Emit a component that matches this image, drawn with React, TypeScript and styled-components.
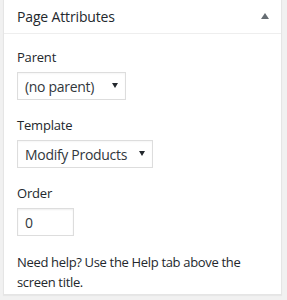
import React, { ReactElement } from 'react';
import styled, { createGlobalStyle } from 'styled-components';

const GlobalStyle = createGlobalStyle`
  html, body {
    margin: 0;
    padding: 0;
    background: #f1f1f1;
  }
  body {
    font-family: "Open Sans", "Noto Sans", sans-serif;
    color: #23282d;
    -webkit-font-smoothing: antialiased;
  }
`;

const Page = styled.div`
  width: 287px;
  height: 300px;
  padding-left: 3px;
  box-sizing: border-box;
  overflow: hidden;
`;

const Postbox = styled.div`
  width: 279px;
  height: 296px;
  margin-top: -1px;
  box-sizing: border-box;
  background: #fff;
  border: 1px solid #e5e5e5;
  box-shadow: 0 1px 1px rgba(0, 0, 0, 0.04);
`;

const BoxHeader = styled.div`
  height: 33px;
  display: flex;
  align-items: center;
  justify-content: space-between;
  padding: 0 12px 0 13px;
  border-bottom: 1px solid #eee;
`;

const Title = styled.h2`
  margin: 0;
  font-size: 14px;
  font-weight: 400;
  letter-spacing: -0.15px;
  color: #23282d;
`;

const ToggleArrow = styled.span`
  width: 0;
  height: 0;
  margin-top: -1px;
  border-left: 4.5px solid transparent;
  border-right: 4.5px solid transparent;
  border-bottom: 6px solid #666d73;
`;

const Inside = styled.div`
  padding: 14px 13px 0;
`;

const Label = styled.p`
  margin: 0 0 6px;
  font-size: 13px;
  line-height: 18px;
  letter-spacing: -0.2px;
  color: #23282d;
`;

const Field = styled.div`
  margin-bottom: 16px;
`;

const SelectBox = styled.div<{ width: number }>`
  width: ${(p) => p.width}px;
  height: 28px;
  box-sizing: border-box;
  border: 1px solid #ddd;
  display: flex;
  align-items: center;
  justify-content: space-between;
  padding: 0 7px 0 7px;
  font-size: 14px;
  letter-spacing: -0.3px;
  color: #32373c;
  box-shadow: inset 0 1px 2px rgba(0, 0, 0, 0.04);
`;

const Caret = styled.span`
  width: 0;
  height: 0;
  margin-top: -2px;
  border-left: 3px solid transparent;
  border-right: 3px solid transparent;
  border-top: 5px solid #23282d;
`;

const NumberInput = styled.div`
  width: 57px;
  height: 28px;
  box-sizing: border-box;
  border: 1px solid #ddd;
  display: flex;
  align-items: center;
  padding: 0 7px;
  font-size: 14px;
  color: #32373c;
  box-shadow: inset 0 1px 2px rgba(0, 0, 0, 0.07);
`;

const Help = styled.p`
  margin: 12px 0 0;
  font-size: 13px;
  line-height: 20px;
  letter-spacing: -0.33px;
  color: #23282d;
`;

const App = (): ReactElement => {
  return (
    <Page>
      <GlobalStyle />
      <Postbox>
        <BoxHeader>
          <Title>Page Attributes</Title>
          <ToggleArrow />
        </BoxHeader>
        <Inside>
          <Field>
            <Label>Parent</Label>
            <SelectBox width={109}>
              (no parent)
              <Caret />
            </SelectBox>
          </Field>
          <Field>
            <Label>Template</Label>
            <SelectBox width={136}>
              Modify Products
              <Caret />
            </SelectBox>
          </Field>
          <Field>
            <Label>Order</Label>
            <NumberInput>0</NumberInput>
          </Field>
          <Help>Need help? Use the Help tab above the screen title.</Help>
        </Inside>
      </Postbox>
    </Page>
  );
};

export default App;
